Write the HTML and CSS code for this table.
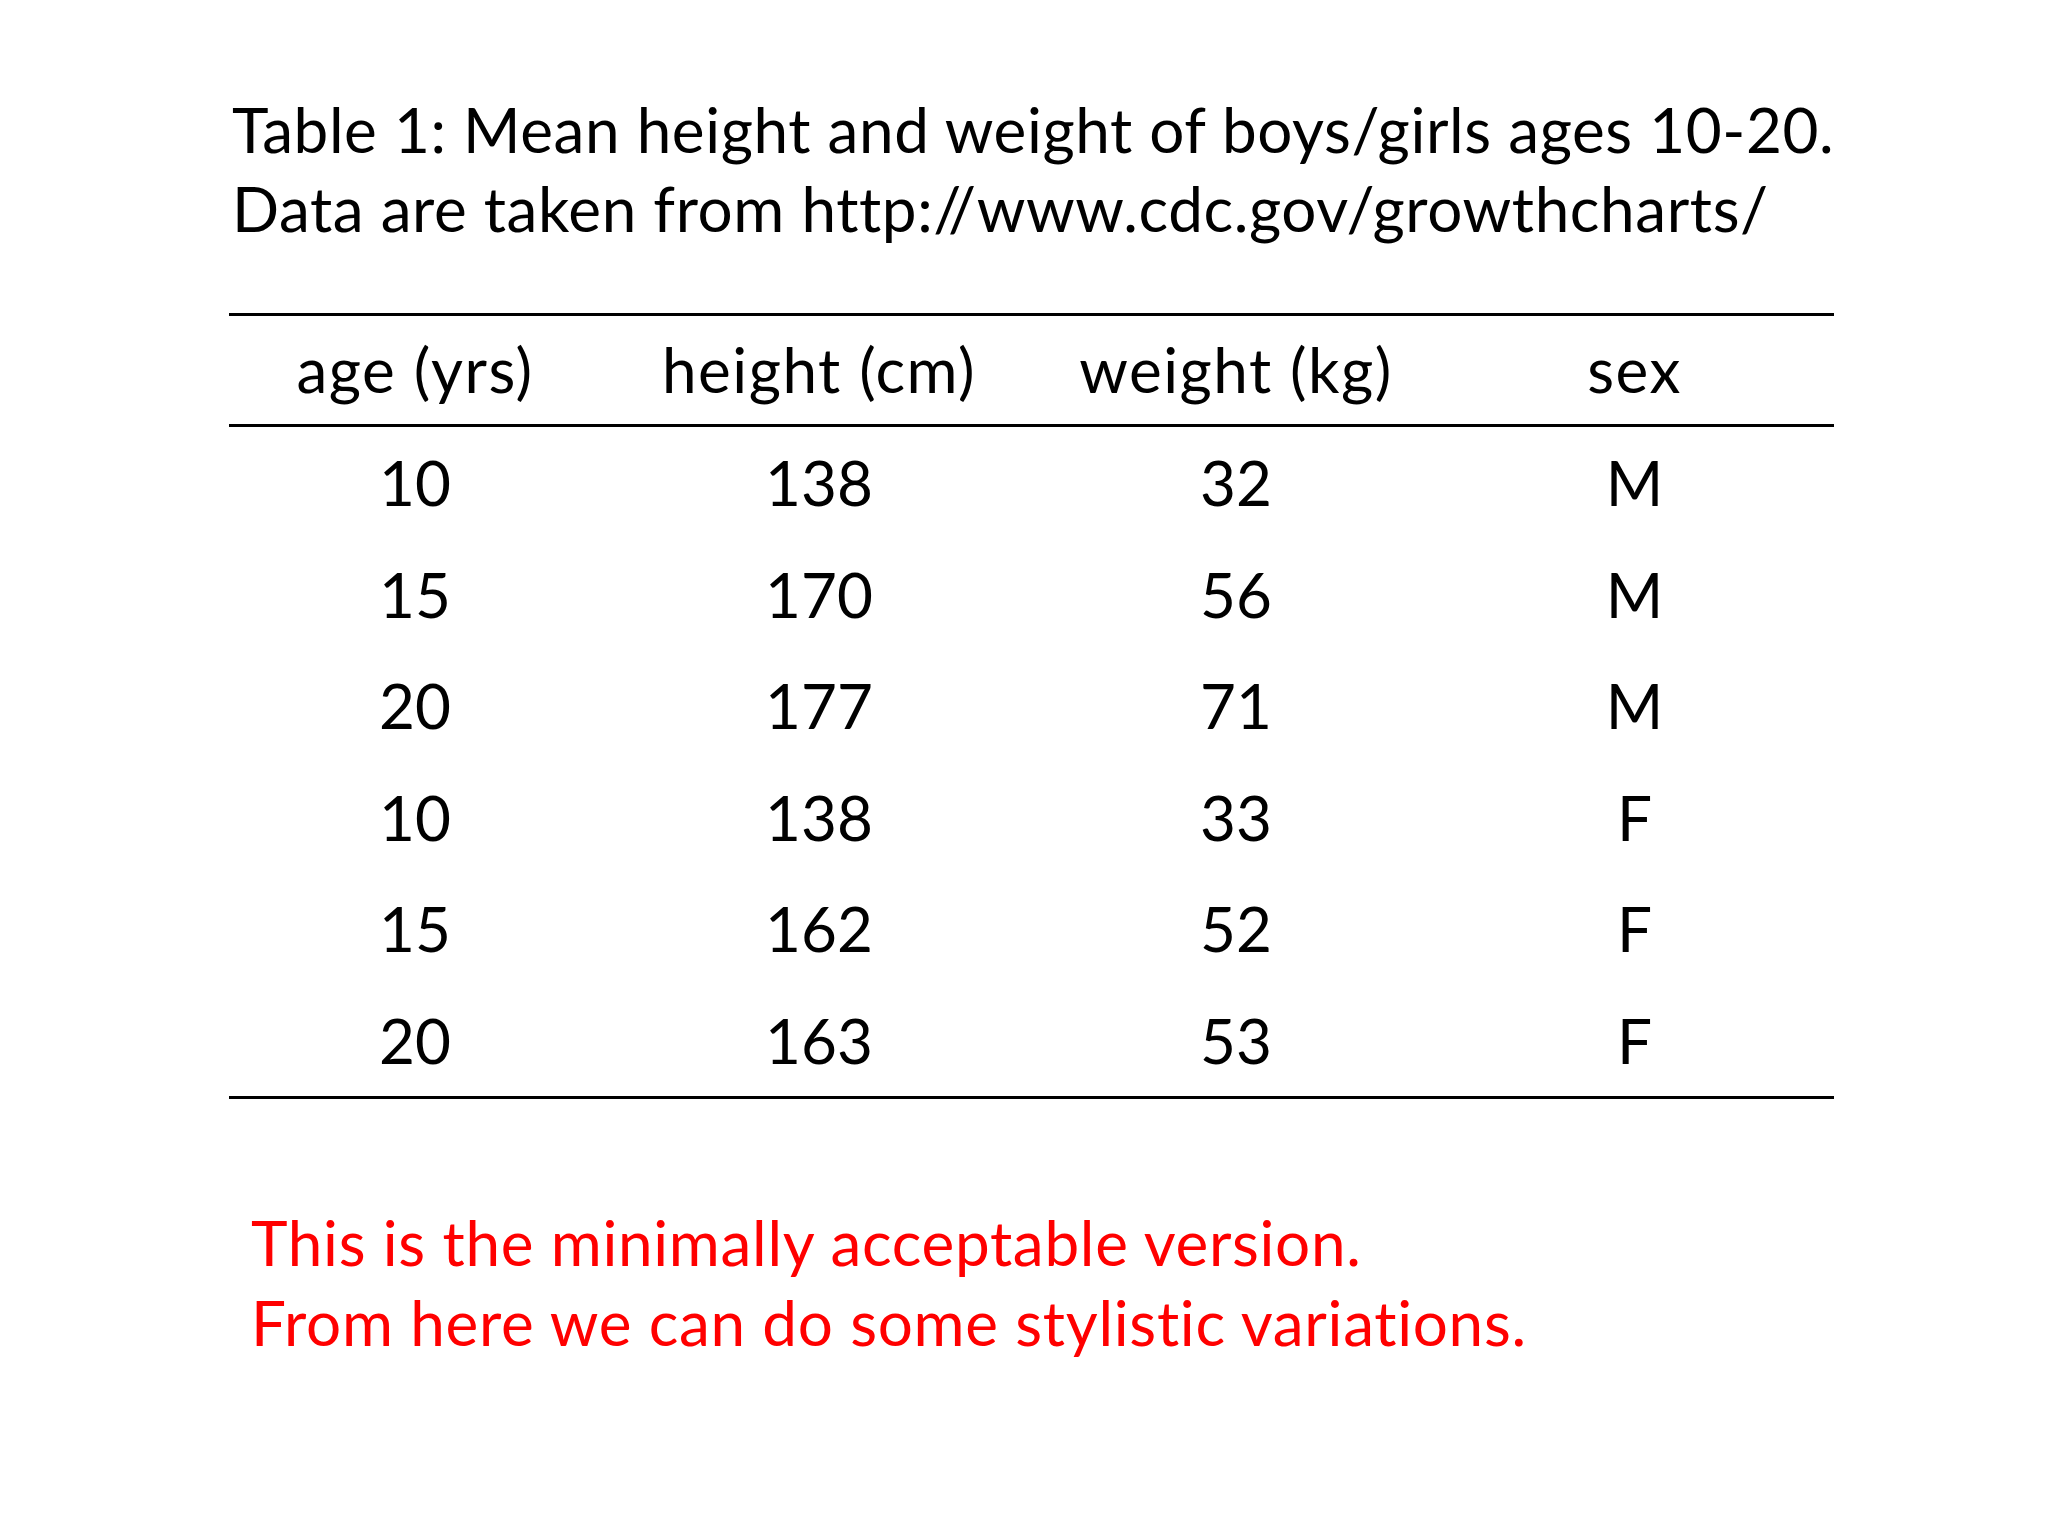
FILE: index.html
```html
<!DOCTYPE html>
<html lang="en">
<head>
<meta charset="utf-8">
<title>Table 1</title>
<link rel="stylesheet" href="styles.css">
</head>
<body>
<main class="slide">
  <p class="caption">Table 1: Mean height and weight of boys/girls ages 10-20.<br>Data are taken from http://www.cdc.gov/growthcharts/</p>
  <div class="table">
    <div class="row head">
      <span>age (yrs)</span><span>height (cm)</span><span>weight (kg)</span><span>sex</span>
    </div>
    <div class="body">
      <div class="row"><span>10</span><span>138</span><span>32</span><span>M</span></div>
      <div class="row"><span>15</span><span>170</span><span>56</span><span>M</span></div>
      <div class="row"><span>20</span><span>177</span><span>71</span><span>M</span></div>
      <div class="row"><span>10</span><span>138</span><span>33</span><span>F</span></div>
      <div class="row"><span>15</span><span>162</span><span>52</span><span>F</span></div>
      <div class="row"><span>20</span><span>163</span><span>53</span><span>F</span></div>
    </div>
  </div>
  <p class="note">This is the minimally acceptable version.<br>From here we can do some stylistic variations.</p>
</main>
</body>
</html>
```

FILE: styles.css
```css
html, body {
  margin: 0;
  padding: 0;
  background: #ffffff;
}

body {
  width: 2048px;
  height: 1536px;
  overflow: hidden;
  font-family: Lato, "Liberation Sans", sans-serif;
  font-size: 62px;
  color: #000000;
}

.slide {
  padding: 90px 0 0 229px;
  width: 1605px;
}

.caption {
  margin: 0;
  padding-left: 3px;
  line-height: 79px;
  letter-spacing: 0.6px;
  white-space: nowrap;
}

.table {
  margin-top: 65px;
  border-top: 3px solid #000;
  border-bottom: 3px solid #000;
}

.row {
  display: grid;
  grid-template-columns: 372px 436px 398px 399px;
  text-align: center;
  height: 111.5px;
  line-height: 111.5px;
}

.row.head {
  height: 108px;
  line-height: 106px;
  letter-spacing: 1.5px;
}

.body {
  border-top: 3px solid #000;
}

.note {
  margin: 103px 0 0 22px;
  line-height: 80px;
  letter-spacing: 0.7px;
  color: #ff0000;
  white-space: nowrap;
}
```
